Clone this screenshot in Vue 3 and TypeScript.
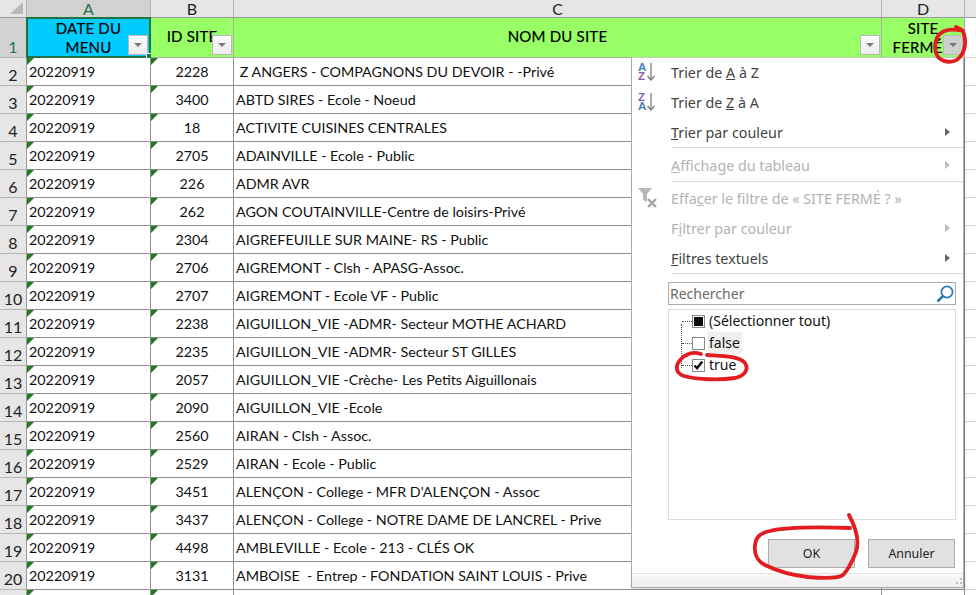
<template>
  <div class="sheet">
    <!-- column letters -->
    <div class="row col-letters">
      <div class="corner"><span class="corner-mark" /></div>
      <div class="letter active">A</div>
      <div class="letter">B</div>
      <div class="letter">C</div>
      <div class="letter">D</div>
      <div class="letter last" />
    </div>

    <!-- table header -->
    <div class="row head-row">
      <div class="row-num active">1</div>
      <div class="th blue">
        DATE DU MENU
        <span class="filter-btn"><i /></span>
        <span class="selection"><span class="handle" /></span>
      </div>
      <div class="th green">ID SITE<span class="filter-btn"><i /></span></div>
      <div class="th green">NOM DU SITE<span class="filter-btn"><i /></span></div>
      <div class="th green closed">SITE FERMÉ&nbsp;?<span class="filter-btn hover"><i /></span></div>
      <div class="td-rest" />
    </div>

    <div v-for="(r, i) in rows" :key="i" class="row data-row">
      <div class="row-num">{{ i + 2 }}</div>
      <div class="td date">{{ r.date }}</div>
      <div class="td id">{{ r.id }}</div>
      <div class="td name">{{ r.name }}</div>
      <div class="td empty" />
      <div class="td-rest" />
    </div>

    <!-- partial row 21 -->
    <div class="row data-row">
      <div class="row-num" />
      <div class="td date" />
      <div class="td id" />
      <div class="td name" />
      <div class="td empty" />
      <div class="td-rest" />
    </div>
  </div>

  <!-- filter dropdown -->
  <div class="menu">
    <div class="item first">
      <svg class="ico" width="26" height="26" viewBox="0 0 26 26">
        <text x="1" y="12" class="az blue-t">A</text>
        <text x="1" y="21" class="az purple-t">Z</text>
        <path d="M14 4v17M10.5 17l3.5 4 3.5-4" class="arrow" />
      </svg>
      <span>Trier de <u>A</u> à Z</span>
    </div>
    <div class="item">
      <svg class="ico" width="26" height="26" viewBox="0 0 26 26">
        <text x="1" y="12" class="az purple-t">Z</text>
        <text x="1" y="21" class="az blue-t">A</text>
        <path d="M14 4v17M10.5 17l3.5 4 3.5-4" class="arrow" />
      </svg>
      <span>Trier de <u>Z</u> à A</span>
    </div>
    <div class="item">
      <span><u>T</u>rier par couleur</span><b class="caret" />
    </div>
    <div class="sep" />
    <div class="item off">
      <span><u>A</u>ffichage du tableau</span><b class="caret" />
    </div>
    <div class="sep after-view" />
    <div class="item off">
      <svg class="ico" width="26" height="26" viewBox="0 0 26 26">
        <path d="M1 3h14l-5 6v8l-4-2V9z" fill="#b9b9b9" />
        <path d="M11 14l8 8M19 14l-8 8" stroke="#a3a3a3" stroke-width="2.4" fill="none" />
      </svg>
      <span>Effa<u>c</u>er le filtre de « SITE FERMÉ ? »</span>
    </div>
    <div class="item off">
      <span>F<u>i</u>ltrer par couleur</span><b class="caret" />
    </div>
    <div class="item">
      <span><u>F</u>iltres textuels</span><b class="caret" />
    </div>
    <div class="sep tight" />

    <div class="search">
      <span>Rechercher</span>
      <svg width="20" height="20" viewBox="0 0 20 20">
        <circle cx="12" cy="8" r="5.6" fill="none" stroke="#2b79b5" stroke-width="1.7" />
        <path d="M8 12l-5.5 5.5" stroke="#2b79b5" stroke-width="2.6" fill="none" />
      </svg>
    </div>

    <div class="tree">
      <div class="tree-line" />
      <div class="node">
        <span class="dots" /><span class="check"><i class="mixed" /></span><span class="lbl">(Sélectionner tout)</span>
      </div>
      <div class="node">
        <span class="dots" /><span class="check" /><span class="lbl hovered">false</span>
      </div>
      <div class="node">
        <span class="dots" />
        <span class="check">
          <svg width="11" height="11" viewBox="0 0 11 11">
            <path d="M1.5 5.5l2.6 2.6 5.2-6.6" fill="none" stroke="#111" stroke-width="2.4" />
          </svg>
        </span>
        <span class="lbl">true</span>
      </div>
    </div>

    <div class="actions">
      <button class="btn">OK</button>
      <button class="btn">Annuler</button>
    </div>
    <div class="grip">
      <svg width="10" height="10" viewBox="0 0 10 10">
        <path d="M7 1h2v2H7zM3 5h2v2H3zM7 5h2v2H7z" fill="#bdbdbd" />
      </svg>
    </div>
  </div>

  <!-- red pen marks -->
  <svg class="marks" width="976" height="595" viewBox="0 0 976 595">
    <path d="M956 27C958 28 961 29 963 31C951 28 943 29 938 36C934 43 934 53 939 58C945 63 954 63 959 58C965 52 967 42 963 31" />
    <path d="M701 354C692 351 686 354 681 359C675 365 675 373 684 376C698 380 722 380 735 378C745 376 749 369 745 363C739 356 722 356 707 355" />
    <path d="M849 515C856 528 860 540 856 552C852 562 848 570 843 575C838 579 820 578 808 577C790 575 775 570 765 565C757 561 754 553 755 545C756 537 760 533 770 531C785 527 820 527 850 528" />
  </svg>
</template>

<script setup lang="ts">
interface SiteRow {
  date: string
  id: string
  name: string
}

const raw: [string, string][] = [
  ['2228', '\u00a0Z ANGERS - COMPAGNONS DU DEVOIR - -Privé'],
  ['3400', 'ABTD SIRES - Ecole - Noeud'],
  ['18', 'ACTIVITE CUISINES CENTRALES'],
  ['2705', 'ADAINVILLE - Ecole - Public'],
  ['226', 'ADMR AVR'],
  ['262', 'AGON COUTAINVILLE-Centre de loisirs-Privé'],
  ['2304', 'AIGREFEUILLE SUR MAINE- RS - Public'],
  ['2706', 'AIGREMONT - Clsh - APASG-Assoc.'],
  ['2707', 'AIGREMONT - Ecole VF - Public'],
  ['2238', 'AIGUILLON_VIE -ADMR- Secteur MOTHE ACHARD'],
  ['2235', 'AIGUILLON_VIE -ADMR- Secteur ST GILLES'],
  ['2057', 'AIGUILLON_VIE -Crèche- Les Petits Aiguillonais'],
  ['2090', 'AIGUILLON_VIE -Ecole'],
  ['2560', 'AIRAN - Clsh - Assoc.'],
  ['2529', 'AIRAN - Ecole - Public'],
  ['3451', "ALENÇON - College - MFR D'ALENÇON - Assoc"],
  ['3437', 'ALENÇON - College - NOTRE DAME DE LANCREL - Prive'],
  ['4498', 'AMBLEVILLE - Ecole - 213 - CLÉS OK'],
  ['3131', 'AMBOISE  - Entrep - FONDATION SAINT LOUIS - Prive'],
]

const rows: SiteRow[] = raw.map(([id, name]) => ({ date: '20220919', id, name }))
</script>

<style>
html, body { margin: 0; height: 100%; overflow: hidden; background: #fff; }
#app { position: relative; width: 976px; height: 595px; overflow: hidden; }
</style>

<style scoped>
.sheet {
  font-family: "Lato", "Liberation Sans", sans-serif;
  font-size: 14.3px;
  color: #111;
  width: 976px;
}

.row {
  display: grid;
  grid-template-columns: 27px 124px 83px 648px 83px 11px;
}

/* ── column letters ── */
.col-letters { height: 18px; grid-template-rows: 18px; }
.corner {
  background: #e6e6e6;
  border-right: 1px solid #b5b5b5;
  border-bottom: 1px solid #9a9a9a;
  position: relative;
}
.corner-mark {
  position: absolute;
  right: 3px;
  bottom: 3px;
  border-style: solid;
  border-width: 0 0 12px 13px;
  border-color: transparent transparent #b9b9b9 transparent;
}
.letter {
  background: #e6e6e6;
  border-right: 1px solid #b5b5b5;
  border-bottom: 1px solid #9a9a9a;
  text-align: center;
  font-size: 16px;
  line-height: 17px;
  color: #222;
}
.letter.active { background: #d2d2d2; color: #217346; }
.letter.last { border-right: 0; }

/* ── row numbers ── */
.row-num {
  background: #e6e6e6;
  border-right: 1px solid #9a9a9a;
  border-bottom: 1px solid #b5b5b5;
  display: flex;
  align-items: flex-end;
  justify-content: center;
  font-size: 16px;
  line-height: 21px;
  color: #222;
}
.row-num.active { background: #d2d2d2; color: #217346; }

/* ── header cells ── */
.head-row { height: 40px; grid-template-rows: 40px; }
.th {
  position: relative;
  display: flex;
  align-items: center;
  justify-content: center;
  text-align: center;
  line-height: 19px;
  font-size: 15px;
  letter-spacing: 0.2px;
  padding: 0 13px 2px;
  box-sizing: border-box;
  border-right: 1px solid #a8a8a8;
  border-bottom: 1px solid #a8a8a8;
  color: #000;
  -webkit-text-stroke: 0.2px #000;
}
.th.blue { background: #00ccff; padding: 0 20px 0; }
.th.green { background: #99ff66; }
.th.closed { padding: 0 6px; }

.filter-btn {
  position: absolute;
  right: 1px;
  bottom: 2px;
  width: 20px;
  height: 20px;
  box-sizing: border-box;
  background: linear-gradient(#fdfdfd, #ececec);
  border: 1px solid #b8b8b8;
  display: flex;
  align-items: center;
  justify-content: center;
}
.filter-btn.hover { background: #cfcfcf; border-color: #bbb; }
.filter-btn i {
  border-style: solid;
  border-width: 4px 4px 0 4px;
  border-color: #777 transparent transparent transparent;
}
.blue .filter-btn { right: 2px; }

.selection {
  position: absolute;
  left: -1px;
  top: -1px;
  right: -1px;
  bottom: -1px;
  border: 2px solid #217346;
  pointer-events: none;
}
.handle {
  position: absolute;
  right: -4px;
  bottom: -4px;
  width: 5px;
  height: 5px;
  background: #217346;
  border: 1px solid #fff;
}

/* ── data cells ── */
.data-row { height: 28px; grid-template-rows: 28px; }
.td {
  position: relative;
  border-right: 1px solid #8f8f8f;
  border-bottom: 1px solid #8f8f8f;
  background: #fff;
  line-height: 28px;
  white-space: pre;
  overflow: hidden;
  padding-left: 2px;
}
.td.id { text-align: center; padding-left: 0; }
.td.date::before,
.td.id::before {
  content: "";
  position: absolute;
  left: 0;
  top: 0;
  border-style: solid;
  border-width: 7px 7px 0 0;
  border-color: #1e7b1e transparent transparent transparent;
}
.td-rest { border-bottom: 1px solid #d6d6d6; background: #fff; }

/* ── dropdown ── */
.menu {
  position: absolute;
  left: 631px;
  top: 57px;
  width: 333px;
  height: 531px;
  box-sizing: border-box;
  background: #fff;
  border-left: 1px solid #a9a9a9;
  border-right: 1px solid #a9a9a9;
  border-bottom: 1px solid #a9a9a9;
  border-top: 1px solid #c6c6c6;
  box-shadow: 1px 1px 2px rgba(0, 0, 0, 0.15);
  font-family: "Noto Sans", "Open Sans", sans-serif;
  font-size: 14.3px;
  color: #444;
  display: flex;
  flex-direction: column;
}
.item {
  position: relative;
  height: 30px;
  flex: none;
  display: flex;
  align-items: center;
  padding-left: 39px;
}
.item.first { margin-top: -1px; }
.item.off { color: #b3b3b3; }
.ico { position: absolute; left: 5px; top: 2px; }
.az { font: 700 11.5px "Liberation Sans", sans-serif; }
.blue-t { fill: #4a82b8; }
.purple-t { fill: #8a5ba8; }
.arrow { stroke: #7d7d7d; stroke-width: 1.3; fill: none; }
.caret {
  position: absolute;
  right: 13px;
  top: 11px;
  border-style: solid;
  border-width: 4px 0 4px 5px;
  border-color: transparent transparent transparent #666;
}
.off .caret { border-left-color: #bbb; }
.sep {
  height: 1px;
  margin: 0 0 2px 40px;
  background: #dcdcdc;
  flex: none;
}
.sep.after-view { margin: 1px 0 1px 40px; }
.sep.tight { margin: 0 0 8px 39px; }

.search {
  flex: none;
  margin-left: 36px;
  width: 288px;
  height: 23px;
  box-sizing: border-box;
  border: 1px solid #ababab;
  display: flex;
  align-items: center;
  justify-content: space-between;
  padding: 0 0 0 1px;
  color: #6a6a6a;
  font-size: 14px;
}

.tree {
  position: relative;
  flex: none;
  margin: 4px 0 0 36px;
  width: 288px;
  height: 211px;
  box-sizing: border-box;
  border: 1px solid #dcdcdc;
  color: #111;
  font-size: 14px;
}
.tree-line {
  position: absolute;
  left: 12px;
  top: 14px;
  height: 44px;
  border-left: 1px dotted #555;
}
.node {
  display: flex;
  align-items: center;
  height: 22px;
}
.dots {
  width: 10px;
  margin-left: 13px;
  border-top: 1px dotted #555;
}
.check {
  width: 13px;
  height: 13px;
  box-sizing: border-box;
  border: 1px solid #8a8a8a;
  background: #fff;
  display: flex;
  align-items: center;
  justify-content: center;
}
.mixed { width: 9px; height: 9px; background: #0c0c0c; }
.lbl { padding: 0 1px; margin-left: 3px; line-height: 22px; }
.lbl.hovered { background: #efefef; padding-right: 2px; }

.actions {
  flex: none;
  display: flex;
  justify-content: flex-end;
  gap: 13px;
  margin-top: 19px;
  padding-right: 8px;
}
.btn {
  width: 87px;
  height: 29px;
  box-sizing: border-box;
  border: 1px solid #adadad;
  background: #e1e1e1;
  font-family: "Noto Sans", "Open Sans", sans-serif;
  font-size: 12.4px;
  color: #222;
  padding: 0;
}
.grip {
  flex: 1;
  margin-top: 5px;
  border-top: 1px solid #e4e4e4;
  background: linear-gradient(#fafafa, #ededed);
  display: flex;
  align-items: flex-end;
  justify-content: flex-end;
}

/* ── pen annotations ── */
.marks {
  position: absolute;
  left: 0;
  top: 0;
  pointer-events: none;
}
.marks path {
  fill: none;
  stroke: #e21c21;
  stroke-width: 3.8;
  stroke-linecap: round;
  stroke-linejoin: round;
}
</style>
